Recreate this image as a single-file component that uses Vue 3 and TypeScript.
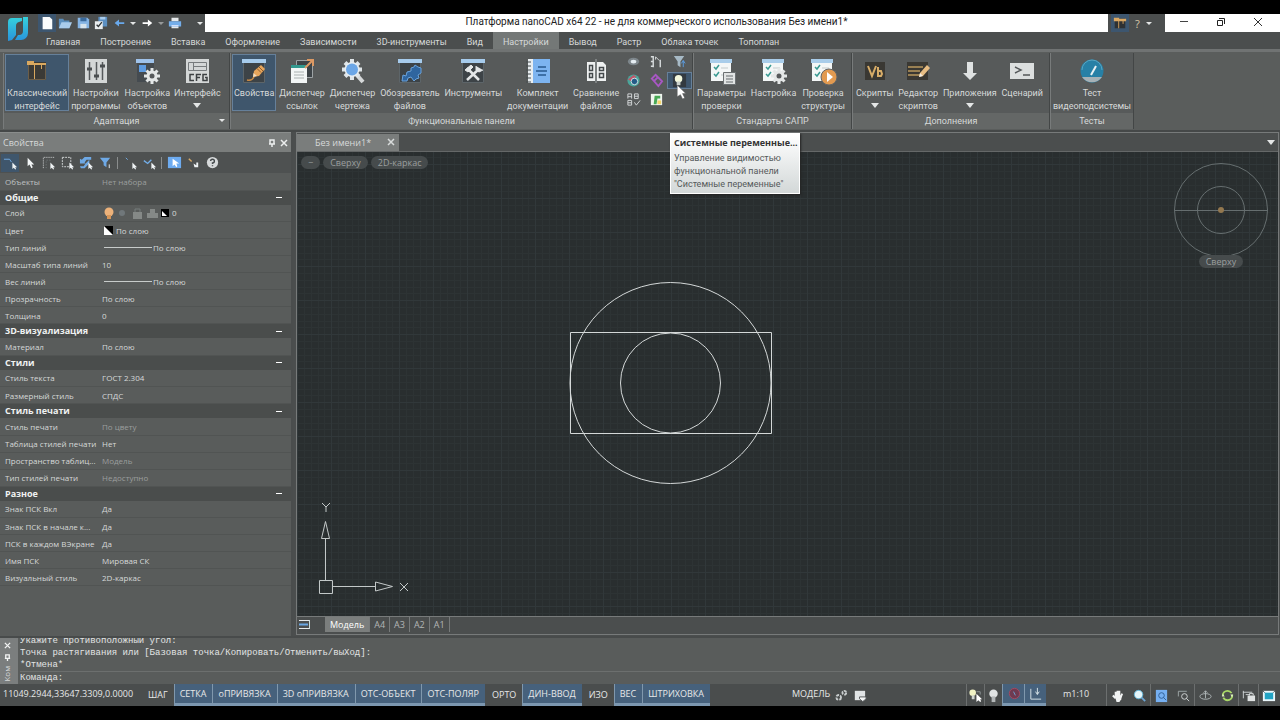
<script setup lang="ts">
import { ref } from 'vue'

interface Tool { label: string[]; icon: string; active?: boolean; drop?: boolean }
interface Group { name: string; cls: string; tools: Tool[]; small?: string[]; launcher?: boolean }
interface Prop { name: string; value: string; dim?: boolean; kind?: 'layer' | 'color' | 'line' }
interface Section { title: string; rows: Prop[] }

const gear = '<g stroke="#e4e7e7" stroke-width="3"><path d="M17 9v16M9 17h16M11.500 11.500l11 11M22.500 11.500l-11 11"/></g><circle cx="17" cy="17" r="5.500" fill="#e4e7e7"/><circle cx="17" cy="17" r="2.500" fill="#56595b"/>'
const checklist = '<path fill="#f4f7f7" d="M1 1h20v21H1z"/><path fill="#a9cdea" d="M0 0h22v4H0z"/><path d="M4 8l2 2 3-4M4 15l2 2 3-4" stroke="#3a9a92" stroke-width="1.500" fill="none"/><path d="M11 9h7M11 16h5" stroke="#c3cbcb"/>'
const panel = '<path fill="#3d4347" stroke="#5d6569" d="M1.500 3.500h21v20h-21z"/><path fill="#a6cbec" d="M0 0h24v4H0z"/>'
const cursor = '<path fill="#eef2f4" d="M10 8v7l1.500-1.500 1.500 2 1-.5-1-2h2z"/>'

const art: Record<string, string> = {
  classic: '<path fill="#3b3a36" d="M3 3h18v18H3z"/><path d="M3.500 5v15.500h17V5" fill="none" stroke="#6c5e49"/><path fill="#d9a85f" d="M2 2h7v2h12v2H2z"/><path d="M9.500 6v14M16.500 6v4" stroke="#d9a85f"/>',
  sliders: '<path fill="#d4d7d7" d="M1 0h22v24H1z"/><path d="M5.500 3v18M12.500 3v18M18.500 3v18" stroke="#55595b" stroke-width="1.500"/><path d="M3 10h5M10 17h5M16 7h5" stroke="#4a4e50" stroke-width="3"/>',
  objects: '<path fill="#454b50" d="M2 2h17v21H2z"/><path fill="#9fc2ea" d="M1 0h18v4H1z"/><path fill="#5e9be0" d="M4 6h7v7H4z"/>' + gear,
  cfg: '<path fill="#d4d7d7" d="M1 0h23v24H1z"/><path fill="none" stroke="#777b7d" d="M3.500 3.500h18v8h-18zM8.500 3.500v8M8 7.500h13"/><path d="M9 15.500H5v6h4M11.500 22v-6.500H16M11.500 18.500H15M22 15.500h-4v6h4v-3h-2" fill="none" stroke="#3c4042" stroke-width="1.500"/>',
  props: panel + '<path d="M5 21c4 1 6-1 7-3" stroke="#c98a45" stroke-width="1.500" fill="none"/><path fill="#e6a55c" d="M11 18l1-6 7-6 4 4-6 7z"/><path fill="#f3dcc0" d="M11 18l.5-4 3.500 3z"/><path d="M17 8l4 4M15 9.500l4 4" stroke="#8d5c2c"/>',
  refs: '<path fill="#3d4347" stroke="#9da3a5" d="M6.500 1.500h16v17h-16z"/><path fill="#f2f5f5" d="M1 6h16v18H1z"/><path fill="#32998f" d="M1 6h16v3H1z"/><path d="M4 13h10M4 16h10M4 19h10" stroke="#a9b0b0"/><path d="M15 9l7-7M17 1h6v6" fill="none" stroke="#dc9964" stroke-width="2"/>',
  manager: '<path d="M15 15l7 8" stroke="#d6d9da" stroke-width="4"/><g stroke="#dfe5e8" stroke-width="4"><path d="M11 0v21M1 10.500h20M4 3.500l14 14M18 3.500l-14 14"/></g><circle cx="11" cy="10.500" r="7.500" fill="#e7edf1"/><circle cx="11" cy="10.500" r="6" fill="#6ba6e6"/>',
  files: panel + '<path d="M4 22l1-6 3 1 1-4 4-1v-3l3-1 1-2 3 2 3 1v5l-3 2 1 3-3 1-2 2-3-4-3 1-1 3z" fill="#2f659f" stroke="#6aa3dc"/>',
  tools: panel + '<path d="M6 9l12 12M18 10L6 21" stroke="#e3e6e7" stroke-width="2.500"/><path d="M4 11l6-5 2 2-5 5zM15 7v4l3 2 4-2" fill="#e3e6e7" stroke="#e3e6e7"/>',
  book: '<path fill="#e9eef1" d="M2 0h6v24H2z"/><path fill="#7db4f0" d="M7 0h17v24H7z"/><path d="M0 3h5M0 7h5M0 11h5M0 15h5M0 19h5M0 23h5" stroke="#474c4f"/><path d="M12 8h8M10 12h11M12 16h8" stroke="#28598e" stroke-width="1.500"/>',
  compare: '<path fill="#eef0f0" d="M3 3h8v19H3zM13 3h6l3 3v16h-9z"/><path d="M12 0v24" stroke="#a1a6a7"/><path d="M5.500 6.500h3v5h-3zM5.500 14.500h3v4h-3zM15.500 8.500h4v3h-4zM15.500 14.500h4v4h-4z" fill="none" stroke="#44494b" stroke-width="1.500"/>',
  params: checklist + '<path fill="#e1e4e4" stroke="#6b7072" d="M13.500 13.500h12v12h-12z"/><path d="M16 17h7M16 20h7M16 23h7" stroke="#676c6e"/>',
  check: checklist + gear,
  structure: checklist + '<circle cx="18" cy="18" r="8" fill="#e29a50" stroke="#626668"/><path fill="#fff" d="M16 13l6 5-6 5z"/>',
  vb: '<path fill="#3a3833" d="M2 3h20v18H2z"/><path d="M5 7l4 10 4-10M15 8v9h3l1-2-1-3h-3" fill="none" stroke="#d8ad68" stroke-width="2"/>',
  script: '<path fill="#3a3833" d="M1 3h21v18H1z"/><path d="M2 8h15M2 12h12M2 16h12" stroke="#b9985f" stroke-width="1.500"/><path fill="#e8bd83" d="M13 18l1-4 7-8 3 3-7 8z"/><path fill="#f6eee2" d="M13 18l1-4 3 3z"/>',
  app: '<path fill="#dfe2e2" d="M9 3h6v11h4l-7 7-7-7h4z"/>',
  term: '<path fill="#dcdfdf" d="M0 4h24v16H0z"/><path d="M5 8l6 3-6 3M13 16h7" fill="none" stroke="#54585a" stroke-width="1.500"/>',
  gauge: '<circle cx="12" cy="12" r="11.500" fill="#2780a6"/><path fill="#a6b1b6" d="M2 18h20a12 12 0 0 1-20 0z"/><path d="M11 16l5-9" stroke="#e9f1f4" stroke-width="2"/><path d="M2 11a10 10 0 0 1 20 0" fill="none" stroke="#58a5c2"/>',
}

const smallArt: Record<string, string> = {
  cloud: '<ellipse cx="8" cy="8" rx="6" ry="4" fill="#7d868b"/><ellipse cx="8" cy="8" rx="3" ry="2" fill="#e5edf2"/>',
  levels: '<path d="M4.500 2v12M2 3h3M2 8h3M2 13h3M12 6v8" stroke="#d8dcdd" stroke-width="1.500"/><path d="M7 3l4 4M7 3v3" stroke="#d8dcdd"/>',
  funnel: '<path fill="#a7bac6" d="M2 2h11L9 8v6L6 12V8z"/><path d="M12 7v7M10 10l2-3 2 3" stroke="#5c9ee3" fill="none"/>',
  sphere: '<circle cx="8" cy="8" r="6.500" fill="#4aa69b"/><path fill="#c0576b" d="M2 7l6-5 3 2-5 5z"/><circle cx="9" cy="9" r="3.500" fill="#245b87" stroke="#d5e2e5"/>',
  link: '<path d="M3 6l4-4 7 7-4 5zM5 9l5-5" fill="none" stroke="#a857c4" stroke-width="2"/>',
  bulb: '<path fill="#333a40" d="M1 1h14v14H1z"/><circle cx="7" cy="6" r="4" fill="#f4f8dc"/><path fill="#cbd2cd" d="M5 9h4v4H5z"/>',
  abc: '<path d="M2 7V2h4v5M2 5h4M9 2h4v5H9zM9 4.500h4M2 9h4v5H2zM2 11.500h4M9 11l2 3 4-5" fill="none" stroke="#d5d9da"/>',
  sheet: '<path fill="#f0f5ef" d="M2 2h12v12H2z"/><path fill="#49a956" d="M6 4h6v3H9l-1 6H5z"/><path fill="#f4d36a" d="M9 9h4v4H9z"/>',
  // selection toolbar
  pick: '<path d="M1 4.500h6l2 3" fill="none" stroke="#73aee8"/>' + cursor,
  arrow: '<path fill="#f3f6f7" d="M6 3v9l2-2 2 4 1.500-1-1.500-3h3z"/>',
  frame: '<path d="M2.500 14V2.500H14" fill="none" stroke="#d5d9da" stroke-dasharray="1 1"/><path d="M5.500 14V5.500H12" fill="none" stroke="#7b8284" stroke-dasharray="1 2"/>' + cursor,
  lasso: '<path d="M2.500 2.500h9v10h-9z" fill="none" stroke="#d5d9da" stroke-dasharray="2 1"/>' + cursor,
  swap: '<path fill="#6ea9e6" d="M1 9V4l2 1 3-3h7v3H8L6 8l1 1zM7 9l4-4v4l-5 5H2l-1-2h4z"/>' + cursor,
  filter: '<path fill="#6ea9e6" d="M2 3h11L9 8v5l-3-2V8z"/><path d="M12 10v4" stroke="#e8ecee"/>',
  add: '<path d="M3 3l2 2" stroke="#73aee8"/>' + cursor,
  link2: '<path d="M2 6l4 3 4-4" fill="none" stroke="#73aee8" stroke-width="1.500"/>' + cursor,
  pickbox: '<path fill="#6dabf0" d="M1 2h14v12H1z"/><path fill="#fff" d="M6 4v8l2-2 2 3 1-1-1-3h3z"/>',
  pair: '<path d="M3 4l3 3" stroke="#d9aa68" stroke-width="1.500"/><path fill="#eef2f4" d="M8 9l3 2V8h2v5H9z"/>',
  help: '<circle cx="8" cy="8" r="6" fill="#d7dadb"/><path d="M6 6.500a2 2 0 1 1 2 2v1M8 11v1" fill="none" stroke="#44494b" stroke-width="1.500"/>',
  // quick access
  blank: '<path fill="#fbfdfd" d="M3 1h8l3 3v11H3z"/>',
  open: '<path fill="#5b8fbe" d="M1 3h5l1 2h6v9H1z"/><path fill="#a9ccec" d="M4 7h12l-3 7H1z"/>',
  save: '<path fill="#85b4e4" d="M2 2h11l2 2v10H2z"/><path fill="#d6e3ec" d="M5 9h7v5H5z"/><path fill="#3b6b9c" d="M5 2h7v4H5z"/>',
  saveall: '<path fill="#5d90c2" d="M5 1h10v11H5z"/><path fill="#a9ccec" d="M7 1h6v3H7z"/><path fill="#e9edef" d="M1 6h9v9H1z"/><path d="M3 10l2 2 4-5" fill="none" stroke="#33383a" stroke-width="1.500"/>',
  undo: '<path fill="#69a9ec" d="M3 8l5-4v3h6v2H8v3z"/>',
  redo: '<path fill="#fff" d="M14 8l-5-4v3H3v2h6v3z"/>',
  print: '<path fill="#e6eaec" d="M4 2h8v4H4zM4 10h8v4H4z"/><path fill="#74aeea" d="M1 6h14v6H1z"/><path d="M4 11h8" stroke="#eef"/>',
  window: '<path fill="#2e3133" d="M2 3h12v11H2z"/><path fill="#dba862" d="M1 2h6v1h8v3H1z"/><path d="M6.500 5v9M11.500 5v4" stroke="#dba862"/>',
  // status bar
  bulbPick: '<circle cx="5" cy="5" r="3.500" fill="#f0f2c4"/><path fill="#cfd4d1" d="M4 8h3v4H4z"/><path d="M9 4h4v3" fill="none" stroke="#8d9596"/><path fill="#fff" d="M9 6v9l2-2 2 2 1-1-1-2h2z"/>',
  lamp: '<circle cx="8" cy="6" r="4.500" fill="#e1e4e4"/><path fill="#b3b7b8" d="M6 9h4v6H6z"/>',
  target: '<circle cx="9" cy="8" r="5.500" fill="#6e3a50" stroke="#a54961"/><path d="M8 6l2 4" stroke="#6da4d4"/>',
  ortho: '<path d="M3 3v11h11M10 2v7M8 6l2 3 2-3" fill="none" stroke="#d9e4ea"/>',
  hand: '<path d="M3 8l3 3M6 4v6M8 3v7M10 3v7M13 6l-2 5" stroke="#f1f3f3" stroke-width="2"/><path fill="#f1f3f3" d="M5 8h7v4l-2 3H7z"/>',
  zoom: '<path d="M9 9l5 5" stroke="#6ca4d2" stroke-width="2"/><circle cx="7" cy="7" r="4.500" fill="#e4f5fa" stroke="#5fb3d8"/>',
  zoomPage: '<path fill="#76b0f2" d="M2 2h12v13H2z"/><circle cx="8" cy="8" r="3" fill="none" stroke="#2f5f94"/><path d="M10 10l3 3" stroke="#2f5f94"/>',
  zoomBox: '<path d="M2.500 9V3.500h9" fill="none" stroke="#9fa7a9"/><circle cx="9" cy="9" r="3" fill="none" stroke="#d2d6d7"/><path d="M11 11l3 3" stroke="#d2d6d7"/>',
  orbit: '<ellipse cx="8" cy="9" rx="6" ry="3" fill="none" stroke="#aeb5b6"/><path d="M8 3v8M6 5l2-2 2 2" fill="none" stroke="#aeb5b6"/>',
  refresh: '<circle cx="8" cy="8" r="5" fill="none" stroke="#a9d867" stroke-width="2" stroke-dasharray="13 2"/><path fill="#dff0c4" d="M2 9l3 0-2-3zM14 7h-3l2 3z"/>',
  lock: '<path d="M2 4.500h10M2.500 3v8M5 7h4" fill="none" stroke="#cdd2d3"/><path fill="#dfe2e2" d="M7 8h8v6H7z"/><path d="M9 8V6h4v2" fill="none" stroke="#dfe2e2"/>',
  fit: '<path fill="#eaf7fb" d="M2 3h13v11H2z"/><path fill="#22a3c4" d="M4 5h9v7H4z"/><path d="M1 2l3 3M16 2l-3 3" stroke="#4a4e50"/>',
  gears: '<circle cx="5" cy="10" r="2.500" fill="none" stroke="#c8cccd" stroke-width="2" stroke-dasharray="3 1"/><circle cx="11" cy="5" r="2" fill="none" stroke="#c8cccd" stroke-width="2" stroke-dasharray="3 1"/>',
  note: '<path fill="#e1e4e5" d="M3 3h11v10H3z"/><path fill="#f5f6f6" stroke="#55595b" d="M8 9.500h7v2l-3.500 3-3.500-3z"/>',
}

const groups: Group[] = [
  { name: 'Адаптация', cls: 'g-adapt', launcher: true, tools: [
    { label: ['Классический', 'интерфейс'], icon: 'classic', active: true },
    { label: ['Настройки', 'программы'], icon: 'sliders' },
    { label: ['Настройка', 'объектов'], icon: 'objects' },
    { label: ['Интерфейс'], icon: 'cfg', drop: true } ] },
  { name: 'Функциональные панели', cls: 'g-panels', tools: [
    { label: ['Свойства'], icon: 'props', active: true },
    { label: ['Диспетчер', 'ссылок'], icon: 'refs' },
    { label: ['Диспетчер', 'чертежа'], icon: 'manager' },
    { label: ['Обозреватель', 'файлов'], icon: 'files' },
    { label: ['Инструменты'], icon: 'tools' },
    { label: ['Комплект', 'документации'], icon: 'book' },
    { label: ['Сравнение', 'файлов'], icon: 'compare' } ],
    small: ['cloud', 'levels', 'funnel', 'sphere', 'link', 'bulb', 'abc', 'sheet'] },
  { name: 'Стандарты САПР', cls: 'g-std', tools: [
    { label: ['Параметры', 'проверки'], icon: 'params' },
    { label: ['Настройка'], icon: 'check' },
    { label: ['Проверка', 'структуры'], icon: 'structure' } ] },
  { name: 'Дополнения', cls: 'g-add', tools: [
    { label: ['Скрипты'], icon: 'vb', drop: true },
    { label: ['Редактор', 'скриптов'], icon: 'script' },
    { label: ['Приложения'], icon: 'app', drop: true },
    { label: ['Сценарий'], icon: 'term' } ] },
  { name: 'Тесты', cls: 'g-test', tools: [{ label: ['Тест', 'видеоподсистемы'], icon: 'gauge' }] },
]

const tabs = ['Главная', 'Построение', 'Вставка', 'Оформление', 'Зависимости', '3D-инструменты', 'Вид', 'Настройки', 'Вывод', 'Растр', 'Облака точек', 'Топоплан']
const activeTab = ref('Настройки')

const sections: Section[] = [
  { title: 'Общие', rows: [
    { name: 'Слой', value: '0', kind: 'layer' }, { name: 'Цвет', value: 'По слою', kind: 'color' },
    { name: 'Тип линий', value: 'По слою', kind: 'line' }, { name: 'Масштаб типа линий', value: '10' },
    { name: 'Вес линий', value: 'По слою', kind: 'line' }, { name: 'Прозрачность', value: 'По слою' },
    { name: 'Толщина', value: '0' } ] },
  { title: '3D-визуализация', rows: [{ name: 'Материал', value: 'По слою' }] },
  { title: 'Стили', rows: [{ name: 'Стиль текста', value: 'ГОСТ 2.304' }, { name: 'Размерный стиль', value: 'СПДС' }] },
  { title: 'Стиль печати', rows: [
    { name: 'Стиль печати', value: 'По цвету', dim: true }, { name: 'Таблица стилей печати', value: 'Нет' },
    { name: 'Пространство таблиц...', value: 'Модель', dim: true }, { name: 'Тип стилей печати', value: 'Недоступно', dim: true } ] },
  { title: 'Разное', rows: [
    { name: 'Знак ПСК Вкл', value: 'Да' }, { name: 'Знак ПСК в начале к...', value: 'Да' },
    { name: 'ПСК в каждом ВЭкране', value: 'Да' }, { name: 'Имя ПСК', value: 'Мировая СК' },
    { name: 'Визуальный стиль', value: '2D-каркас' } ] },
]

const modes = ref([
  { name: 'ШАГ', on: false }, { name: 'СЕТКА', on: true }, { name: 'оПРИВЯЗКА', on: true },
  { name: '3D оПРИВЯЗКА', on: true }, { name: 'ОТС-ОБЪЕКТ', on: true }, { name: 'ОТС-ПОЛЯР', on: true },
  { name: 'ОРТО', on: false }, { name: 'ДИН-ВВОД', on: true }, { name: 'ИЗО', on: false },
  { name: 'ВЕС', on: true }, { name: 'ШТРИХОВКА', on: true },
])
const sheets = ['Модель', 'A4', 'A3', 'A2', 'A1']
const propTools = ['pick', 'arrow', 'frame', 'lasso', 'swap', 'filter', '|', 'add', 'link2', '|', 'pickbox', 'pair', 'help']
const command = ref('')
</script>

<template>
  <div class="screen">
    <header class="top">
      <svg class="logo" viewBox="0 0 20 24" aria-hidden="true">
        <defs><linearGradient id="lg" x1="0" y1="0" x2="0" y2="1"><stop offset="0" stop-color="#35d2dc" /><stop offset="1" stop-color="#2993dc" /></linearGradient></defs>
        <path fill="url(#lg)" d="M0 24V5a4 4 0 0 1 4-4h10v3l-3 1a4 4 0 0 0-3 4v9l-4 5zM15 0h5v16a7 7 0 0 1-7 7H7l3-5h1a4 4 0 0 0 4-4z" />
      </svg>
      <div class="top-main">
        <div class="titlebar">
          <div class="quick">
            <button class="q on" aria-label="Новый"><svg viewBox="0 0 16 16" v-html="smallArt.blank" /></button>
            <button v-for="q in ['open', 'save', 'saveall', 'undo']" :key="q" class="q" :aria-label="q"><svg viewBox="0 0 16 16" v-html="smallArt[q]" /></button>
            <i class="tri small" />
            <button class="q" aria-label="redo"><svg viewBox="0 0 16 16" v-html="smallArt.redo" /></button>
            <i class="tri small dim" />
            <button class="q" aria-label="print"><svg viewBox="0 0 16 16" v-html="smallArt.print" /></button>
            <i class="tri small last" />
          </div>
          <h1>Платформа nanoCAD x64 22 - не для коммерческого использования Без имени1*</h1>
          <div class="help">
            <button class="q on" aria-label="Окно"><svg viewBox="0 0 16 16" v-html="smallArt.window" /></button>
            <button class="qm">?</button><i class="tri small" />
          </div>
          <div class="win">
            <button aria-label="Свернуть"><svg viewBox="0 0 10 10"><path d="M1 4.500h8" stroke="#444" fill="none" /></svg></button>
            <button aria-label="Восстановить"><svg viewBox="0 0 10 10"><path d="M1.500 3.500h5v5h-5zM3 1.500h5.500V7" stroke="#222" fill="none" /></svg></button>
            <button aria-label="Закрыть"><svg viewBox="0 0 10 10"><path d="M1 1l8 8M9 1l-8 8" stroke="#333" fill="none" /></svg></button>
          </div>
        </div>
        <nav class="tabs">
          <button v-for="t in tabs" :key="t" :class="{ on: t === activeTab }" @click="activeTab = t">{{ t }}</button>
        </nav>
      </div>
    </header>

    <section class="ribbon">
      <div v-for="g in groups" :key="g.name" class="group" :class="g.cls">
        <div class="tools">
          <button v-for="t in g.tools" :key="t.icon" class="tool" :class="{ on: t.active }">
            <svg viewBox="0 0 24 24" v-html="art[t.icon]" />
            <span v-for="l in t.label" :key="l">{{ l }}</span>
            <i v-if="t.drop" class="tri" />
          </button>
          <div v-if="g.small" class="mini">
            <button v-for="s in g.small" :key="s" :aria-label="s" :class="{ on: s === 'bulb' }">
              <svg viewBox="0 0 16 16" v-html="smallArt[s]" />
              <template v-if="s === 'bulb'">
                <svg class="pointer" viewBox="0 0 8 13"><path d="M0 0v11l3-2 2 4 2-1-2-4h3z" fill="#fff" stroke="#555" stroke-width=".5" /></svg>
              </template>
            </button>
            <div class="tip" role="tooltip">
              <b>Системные переменные...</b>
              <p>Управление видимостью<br>функциональной панели<br>"Системные переменные"</p>
            </div>
          </div>
        </div>
        <div class="caption">{{ g.name }}<i v-if="g.launcher" class="tri small" /></div>
      </div>
    </section>

    <main class="body">
      <aside class="props">
        <div class="props-head">
          <span>Свойства</span>
          <button aria-label="Закрепить"><svg viewBox="0 0 8 8"><path d="M2 5V1h4v4M1 5h6M4 5v3" fill="none" stroke="#eceeee" stroke-width="1.500" /></svg></button>
          <button aria-label="Закрыть"><svg viewBox="0 0 8 8"><path d="M1 1l6 6M7 1L1 7" stroke="#eceeee" stroke-width="1.500" /></svg></button>
        </div>
        <div class="props-tools">
          <template v-for="(p, i) in propTools" :key="i">
            <i v-if="p === '|'" class="sep" />
            <button v-else :aria-label="p" :class="{ on: p === 'pick' }"><svg viewBox="0 0 16 16" v-html="smallArt[p]" /></button>
          </template>
        </div>
        <table>
          <tbody><tr><th class="dim">Объекты</th><td class="dim">Нет набора</td></tr></tbody>
          <tbody v-for="s in sections" :key="s.title">
            <tr class="sec"><th colspan="2"><div><span>{{ s.title }}</span><button :aria-label="'Свернуть ' + s.title" /></div></th></tr>
            <tr v-for="r in s.rows" :key="r.name">
              <th>{{ r.name }}</th>
              <td :class="{ dim: r.dim }">
                <div>
                  <svg v-if="r.kind === 'layer'" class="layer" viewBox="0 0 70 14">
                    <circle cx="7" cy="6" r="4.500" fill="#edb27a" /><path fill="#d69558" d="M5 9h4v4H5z" />
                    <circle cx="20" cy="7" r="3" fill="#70777a" /><path fill="#858987" d="M31 6h9v7h-9z" /><path d="M33 6V3h5v3" stroke="#777c7c" fill="none" />
                    <path fill="#858987" d="M45 7h11v5H45zM48 3h5v4h-5z" /><path fill="#000" d="M59 3h8v8h-8z" /><path fill="#fff" d="M60 5l5 5h-5z" />
                  </svg>
                  <svg v-if="r.kind === 'color'" class="chip" viewBox="0 0 9 9"><path fill="#000" d="M0 0h9v9H0z" /><path fill="#fff" d="M0 0l9 9H0z" /></svg>
                  <i v-if="r.kind === 'line'" class="line" />{{ r.value }}
                </div>
              </td>
            </tr>
          </tbody>
        </table>
      </aside>

      <section class="work">
        <div class="docs">
          <div class="doc"><span>Без имени1*</span><button aria-label="Закрыть"><svg viewBox="0 0 8 8"><path d="M1 1l6 6M7 1L1 7" stroke="#d8dbdb" stroke-width="1.500" /></svg></button></div>
          <i class="tri" />
        </div>
        <div class="canvas">
          <svg class="drawing" aria-label="Чертёж">
            <defs>
              <pattern id="grid" x="0" y="12" width="34" height="34" patternUnits="userSpaceOnUse">
                <path d="M7.500 0v34M14.500 0v34M21.500 0v34M27.500 0v34M0 7.500h34M0 14.500h34M0 21.500h34M0 27.500h34" stroke="#2d3334" />
                <path d="M.5 0v34M0 .5h34" stroke="#31383a" />
              </pattern>
            </defs>
            <rect width="100%" height="100%" fill="url(#grid)" />
            <g fill="none" stroke="#d4d8d8">
              <circle cx="373.500" cy="231" r="100.500" /><circle cx="373.500" cy="231" r="50" />
              <path d="M273.500 180.500h201v101h-201z" />
              <g stroke="#c3c8c8">
                <path d="M22.500 428.500h13v13h-13zM28.500 428v-42M36 434.500h43M24.500 386.500l4-17 4 17zM78.500 430l17 4.500-17 4.500z" />
                <path d="M25 351l4 4 4-4M29 355v5M103 431l8 8M111 431l-8 8" />
              </g>
            </g>
          </svg>
          <div class="pills"><button>−</button><button>Сверху</button><button>2D-каркас</button></div>
          <div class="compass">
            <svg viewBox="0 0 96 96"><g fill="none" stroke="#666e6f"><circle cx="48" cy="48" r="46.500" /><circle cx="48" cy="48" r="23.500" /><path d="M2 48.500h92" /></g><circle cx="48" cy="48" r="3" fill="#93784f" /></svg>
            <button>Сверху</button>
          </div>
        </div>
        <div class="sheets">
          <svg viewBox="0 0 11 11"><path d="M0 1.500h11M0 9.500h11" stroke="#e5e9ea" /><path d="M0 5.500h9" stroke="#69a6e2" stroke-width="2" /><path d="M10.500 1v9" stroke="#cdd" /></svg>
          <button v-for="(s, i) in sheets" :key="s" :class="{ on: i === 0 }">{{ s }}</button>
        </div>
      </section>
    </main>

    <section class="command">
      <div class="grip">
        <svg viewBox="0 0 8 8"><path d="M1 1l6 6M7 1L1 7" stroke="#f3f4f4" stroke-width="1.500" /></svg>
        <svg viewBox="0 0 8 8"><path d="M2 5V1h4v4M1 5h6M4 5v3" fill="none" stroke="#f3f4f4" stroke-width="1.500" /></svg>
        <span>Ком</span>
      </div>
      <div class="console">
        <div class="log"><p>Укажите противоположный угол:</p><p>Точка растягивания или [Базовая точка/Копировать/Отменить/выХод]:</p><p>*Отмена*</p></div>
        <div class="prompt"><label for="cmd">Команда:</label><input id="cmd" v-model="command"></div>
      </div>
    </section>

    <footer class="status">
      <span class="coords">11049.2944,33647.3309,0.0000</span>
      <button v-for="m in modes" :key="m.name" class="mode" :class="{ on: m.on }" :aria-pressed="m.on" @click="m.on = !m.on">{{ m.name }}</button>
      <span class="model">МОДЕЛЬ</span>
      <button v-for="s in ['gears', 'note']" :key="s" class="st" :aria-label="s"><svg viewBox="0 0 16 16" v-html="smallArt[s]" /></button>
      <div class="right">
        <button v-for="s in ['bulbPick', 'lamp']" :key="s" class="st edge" :aria-label="s"><svg viewBox="0 0 16 16" v-html="smallArt[s]" /></button>
        <button v-for="s in ['target', 'ortho']" :key="s" class="st lit" :aria-label="s"><svg viewBox="0 0 16 16" v-html="smallArt[s]" /></button>
        <span class="scale">m1:10</span>
        <button v-for="(s, i) in ['hand', 'zoom', 'zoomPage', 'zoomBox', 'orbit', 'refresh']" :key="s" class="st wide" :class="{ edge: i % 2 === 0 }" :aria-label="s"><svg viewBox="0 0 16 16" v-html="smallArt[s]" /></button>
        <button v-for="s in ['lock', 'fit']" :key="s" class="st edge end" :aria-label="s"><svg viewBox="0 0 16 16" v-html="smallArt[s]" /></button>
      </div>
    </footer>
  </div>
</template>

<style>
body { margin: 0; background: #000; }
</style>

<style scoped>
* { box-sizing: border-box; }
.screen { height: 100vh; padding: 14px 0; display: flex; flex-direction: column; background: #000; color: #d6d9d9; font: 9px/13px "Open Sans", "Noto Sans", sans-serif; overflow: hidden; }
button { font: inherit; color: inherit; background: none; border: 0; padding: 0; margin: 0; white-space: nowrap; }
svg { display: block; flex: none; }
.tri { display: block; border: 4px solid transparent; border-top: 5px solid #e4e6e6; border-bottom: 0; flex: none; }
.tri.small { border-width: 3px 3px 0; }
.tri.dim { opacity: .5; }

.top { display: flex; background: #4b4e4e; flex: none; height: 35px; }
.logo { width: 20px; height: 24px; margin: 3px 8px 0 8px; }
.top-main { flex: 1; min-width: 0; }
.titlebar { display: flex; height: 18px; }
.quick { display: flex; align-items: center; width: 169px; padding-left: 2px; }
.q { height: 18px; width: 18px; display: grid; place-items: center; flex: none; }
.q.on { background: #3d566f; }
.q svg { width: 14px; height: 14px; }
.quick .tri { margin: 0 2px; }
.quick .last { margin-left: 13px; }
h1 { flex: 1; margin: 0; background: #fff; color: #222; font-family: Roboto, "Open Sans", sans-serif; font-size: 10px; line-height: 16px; font-weight: 400; text-align: center; white-space: nowrap; overflow: hidden; }
.help { width: 57px; display: flex; align-items: center; padding-left: 3px; gap: 6px; color: #d9c9a9; }
.qm { font-size: 11px; }
.win { display: flex; background: #fff; width: 115px; padding-right: 4px; }
.win button { flex: 1; display: grid; place-items: center; padding-bottom: 3px; }
.win svg { width: 10px; height: 10px; }
.tabs { display: flex; height: 17px; font-family: Roboto, "Open Sans", sans-serif; }
.tabs button { padding: 3px 10px 0; line-height: 14px; }
.tabs .on { background: #747877; }

.ribbon { display: flex; flex: none; height: 83px; background: #5a5d5c; border-top: 3px solid #707373; border-bottom: 2px solid #454848; padding: 1px 3px 0; position: relative; z-index: 2; font-family: Roboto, "Open Sans", sans-serif; }
.group { display: flex; flex-direction: column; border-left: 1px solid #787b7b; border-right: 1px solid #434646; background: #575a5a; height: 76px; flex: none; }
.g-adapt { width: 227px; } .g-panels { width: 463px; } .g-std { width: 159px; } .g-add { width: 198px; } .g-test { width: 84px; }
.tools { display: flex; justify-content: space-between; flex: 1; padding: 1px; }
.g-adapt .tools { justify-content: flex-start; }
.g-std .tools, .g-add .tools { padding-right: 4px; }
.g-test .tools { justify-content: center; }
.tool { display: flex; flex-direction: column; align-items: center; height: 57px; padding: 4px 1px 0; border: 1px solid transparent; }
.tool.on { background: #3f566c; border-color: #66809a; }
.tool svg { width: 24px; height: 24px; margin-bottom: 4px; overflow: visible; }
.tool .tri { margin-top: 3px; }
.caption { position: relative; height: 16px; background: #646766; text-align: center; line-height: 17px; }
.caption .tri { position: absolute; right: 4px; top: 6px; }
.mini { display: grid; grid-template-columns: repeat(3, 23px); grid-auto-rows: 15px; row-gap: 4px; position: relative; }
.mini button { display: grid; place-items: center; position: relative; }
.mini .on { background: #3f566c; outline: 1px solid #66809a; }
.mini svg { width: 15px; height: 15px; }
.mini .pointer { position: absolute; left: 9px; top: 12px; width: 9px; height: 14px; }
.tip { position: absolute; z-index: 5; top: 79px; left: 48px; width: 130px; padding: 2px 3px; border: 1px solid #fff; background: linear-gradient(#fff, #d3d8d8); color: #555a5a; white-space: nowrap; line-height: 13px; box-shadow: 1px 1px 2px #222; }
.tip b { color: #333; display: block; margin-bottom: 3px; font-family: "Open Sans", sans-serif; }
.tip p { margin: 0; }

.body { display: flex; flex: 1; min-height: 0; background: #4b4e4e; }
.props { width: 293px; flex: none; background: #595c5b; display: flex; flex-direction: column; border-right: 2px solid #4a4d4d; }
.props-head { display: flex; align-items: center; height: 20px; background: #7a7d7c; padding: 0 3px; gap: 4px; border-top: 1px solid #8a8d8c; }
.props-head span { flex: 1; }
.props-head svg { width: 8px; height: 8px; }
.props-tools { height: 21px; background: #4e5151; display: flex; align-items: center; gap: 1px; padding-left: 1px; }
.props-tools button { width: 18px; height: 18px; display: grid; place-items: center; }
.props-tools svg { width: 15px; height: 15px; }
.props-tools .on { background: #3f566c; }
.sep { width: 1px; height: 12px; background: #8a8d8d; margin: 0 2px; }
table { border-collapse: collapse; width: 100%; table-layout: fixed; font-size: 8px; }
tr { height: 17px; }
th, td { padding: 0; text-align: left; font-weight: 400; height: 17px; line-height: 15px; border-bottom: 1px solid #515453; white-space: nowrap; }
th { width: 102px; padding-left: 5px; }
.dim { color: #9b9e9e; }
th.dim { color: #bfc2c2; }
.sec, .sec th { height: 14px; line-height: 14px; background: #4a4d4c; font-weight: 700; color: #f0f2f2; font-size: 9px; border: 0; }
.sec div, td div { display: flex; align-items: center; }
.sec span { flex: 1; }
.sec button { width: 12px; height: 12px; margin-right: 6px; display: grid; place-items: center; }
.sec button::before { content: ""; width: 6px; height: 1px; background: #fff; }
.layer { width: 70px; height: 14px; }
.chip { width: 9px; height: 9px; margin: 0 3px 0 2px; }
.line { width: 48px; height: 1px; background: #c7cbca; margin: 0 1px 0 2px; }

.work { flex: 1; min-width: 0; margin: 0 1px 1px 3px; display: flex; flex-direction: column; border: 1px solid #777a7a; border-top: 0; }
.docs { height: 20px; display: flex; justify-content: space-between; align-items: center; padding-right: 3px; border-top: 1px solid #777a7a; border-bottom: 1px solid #656868; }
.doc { background: #7a7d7c; display: flex; width: 102px; height: 17px; align-items: center; justify-content: space-between; padding: 0 4px 0 18px; }
.doc svg { width: 8px; height: 8px; }
.canvas { flex: 1; position: relative; background: #292e2f; min-height: 0; overflow: hidden; }
.drawing { position: absolute; inset: 0; width: 100%; height: 100%; }
.pills { position: relative; display: flex; gap: 3px; padding: 4px; }
.pills button, .compass button { background: #464b4c; color: #9b9f9f; border-radius: 7px; height: 13px; line-height: 12px; padding: 0 7px; }
.compass { position: absolute; right: 9px; top: 10px; display: flex; flex-direction: column; align-items: center; }
.compass svg { width: 96px; height: 96px; margin-bottom: -3px; }
.sheets { height: 18px; display: flex; align-items: flex-start; padding-left: 2px; border-top: 1px solid #777a7a; }
.sheets svg { width: 11px; height: 11px; margin: 2px 15px 0 0; }
.sheets button { height: 15px; line-height: 14px; padding: 0 4px; border-right: 1px solid #777a7a; color: #b3b6b6; }
.sheets .on { background: #7b7e7d; color: #fff; padding: 0 5px; }

.command { display: flex; flex: none; height: 48px; background: #595c5b; border-top: 2px solid #484b4b; font-family: "Liberation Mono", monospace; }
.grip { width: 18px; background: #7b7e7e; display: flex; flex-direction: column; align-items: center; padding: 4px 4px 0 0; gap: 5px; font-family: "Open Sans", sans-serif; font-size: 8px; }
.grip svg { width: 7px; height: 7px; }
.grip span { writing-mode: vertical-rl; transform: rotate(180deg); line-height: 10px; }
.console { flex: 1; padding-left: 2px; color: #e3e5e5; display: flex; flex-direction: column; }
.log { height: 34px; overflow: hidden; display: flex; flex-direction: column; justify-content: flex-end; border-bottom: 1px solid #6c6f6e; }
.log p { margin: 0; line-height: 12px; flex: none; }
.prompt { display: flex; height: 12px; line-height: 13px; }
.prompt input { flex: 1; font: inherit; color: inherit; background: none; border: 0; outline: 0; padding: 0 4px; }

.status { display: flex; flex: none; height: 22px; background: #4a4d4d; align-items: stretch; line-height: 20px; color: #e6e8e8; }
.coords { width: 141px; padding-left: 3px; }
.mode { padding: 0 6px; line-height: 18px; border-left: 1px solid transparent; }
.mode.on { background: #46617c; border-left-color: #8098ad; border-bottom: 3px solid #7c97b0; padding: 0 6px 0 5px; }
.model { margin-left: 82px; margin-right: 2px; }
.st { width: 18px; display: grid; place-items: center; }
.st svg { width: 15px; height: 15px; }
.right { margin-left: auto; display: flex; padding-right: 2px; }
.edge { border-left: 1px solid #6c6f6f; }
.lit { width: 22px; background: #46617c; border-left: 1px solid #8098ad; border-bottom: 3px solid #7c97b0; }
.scale { width: 60px; text-align: center; }
.wide { width: 22px; }
.end { width: 20px; }
</style>
